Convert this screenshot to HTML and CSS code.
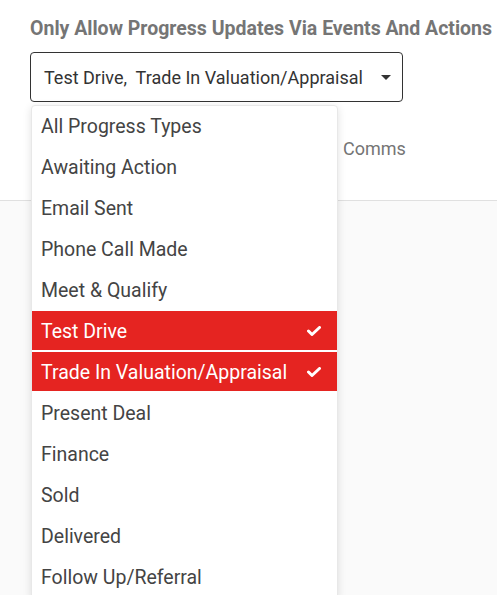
FILE: index.html
```html
<!DOCTYPE html>
<html lang="en">
<head>
    <meta charset="UTF-8">
    <meta name="viewport" content="width=device-width, initial-scale=1.0">
    <title>Progress Settings</title>
    <link rel="stylesheet" href="styles.css">
</head>
<body>
    <div class="field">
        <div class="field-label">Only Allow Progress Updates Via Events And Actions</div>
        <div class="select">
            <span class="select-value">Test Drive,&nbsp; Trade In Valuation/Appraisal</span>
            <span class="caret"></span>
        </div>

        <ul class="dropdown">
            <li class="option">All Progress Types</li>
            <li class="option">Awaiting Action</li>
            <li class="option">Email Sent</li>
            <li class="option">Phone Call Made</li>
            <li class="option">Meet &amp; Qualify</li>
            <li class="option selected">Test Drive
                <svg class="check" viewBox="0 0 14 10" width="14" height="10"><polyline points="1.5,5 5,8.5 12.5,1.5"/></svg>
            </li>
            <li class="option selected">Trade In Valuation/Appraisal
                <svg class="check" viewBox="0 0 14 10" width="14" height="10"><polyline points="1.5,5 5,8.5 12.5,1.5"/></svg>
            </li>
            <li class="option">Present Deal</li>
            <li class="option">Finance</li>
            <li class="option">Sold</li>
            <li class="option">Delivered</li>
            <li class="option">Follow Up/Referral</li>
        </ul>
    </div>

    <div class="tabs">
        <span class="tab">Comms</span>
    </div>

    <div class="content"></div>
</body>
</html>
```

FILE: styles.css
```css
body {
    margin: 0;
    font-family: Roboto, "Liberation Sans", sans-serif;
    background: white;
    height: 595px;
    overflow: hidden;
}
.field {
    position: relative;
    padding: 17px 30px 0 30px;
}
.field-label {
    font-size: 19.5px;
    font-weight: bold;
    line-height: 24px;
    color: #757575;
    white-space: nowrap;
    margin-bottom: 11px;
}
.select {
    box-sizing: border-box;
    width: 373px;
    height: 50px;
    border: 1px solid #333;
    border-radius: 4px;
    display: flex;
    align-items: center;
    padding: 0 11px 0 13px;
}
.select-value {
    flex: 1;
    font-size: 18px;
    color: #333;
    white-space: pre;
}
.caret {
    width: 0;
    height: 0;
    border-left: 5px solid transparent;
    border-right: 5px solid transparent;
    border-top: 5px solid #333;
}
.dropdown {
    position: absolute;
    top: 105px;
    left: 31px;
    width: 307px;
    box-sizing: border-box;
    margin: 0;
    padding: 0;
    list-style: none;
    background: white;
    border: 1px solid #e8e8e8;
    border-radius: 4px;
    box-shadow: 0 2px 8px rgba(0, 0, 0, 0.12);
    z-index: 2;
}
.option {
    height: 39px;
    margin-bottom: 2px;
    padding: 1px 16px 0 9px;
    box-sizing: border-box;
    display: flex;
    align-items: center;
    justify-content: space-between;
    font-size: 19.5px;
    color: #444;
}
.option.selected {
    background: #e52421;
    color: white;
}
.check {
    fill: none;
    stroke: white;
    stroke-width: 3;
    stroke-linecap: round;
    stroke-linejoin: round;
}
.tabs {
    height: 98px;
    box-sizing: border-box;
    padding: 0 0 6px 343px;
    display: flex;
    align-items: center;
}
.tab {
    font-size: 18px;
    color: #757575;
}
.content {
    border-top: 1px solid #e0e0e0;
    background: #fafafa;
    height: 400px;
}
```
